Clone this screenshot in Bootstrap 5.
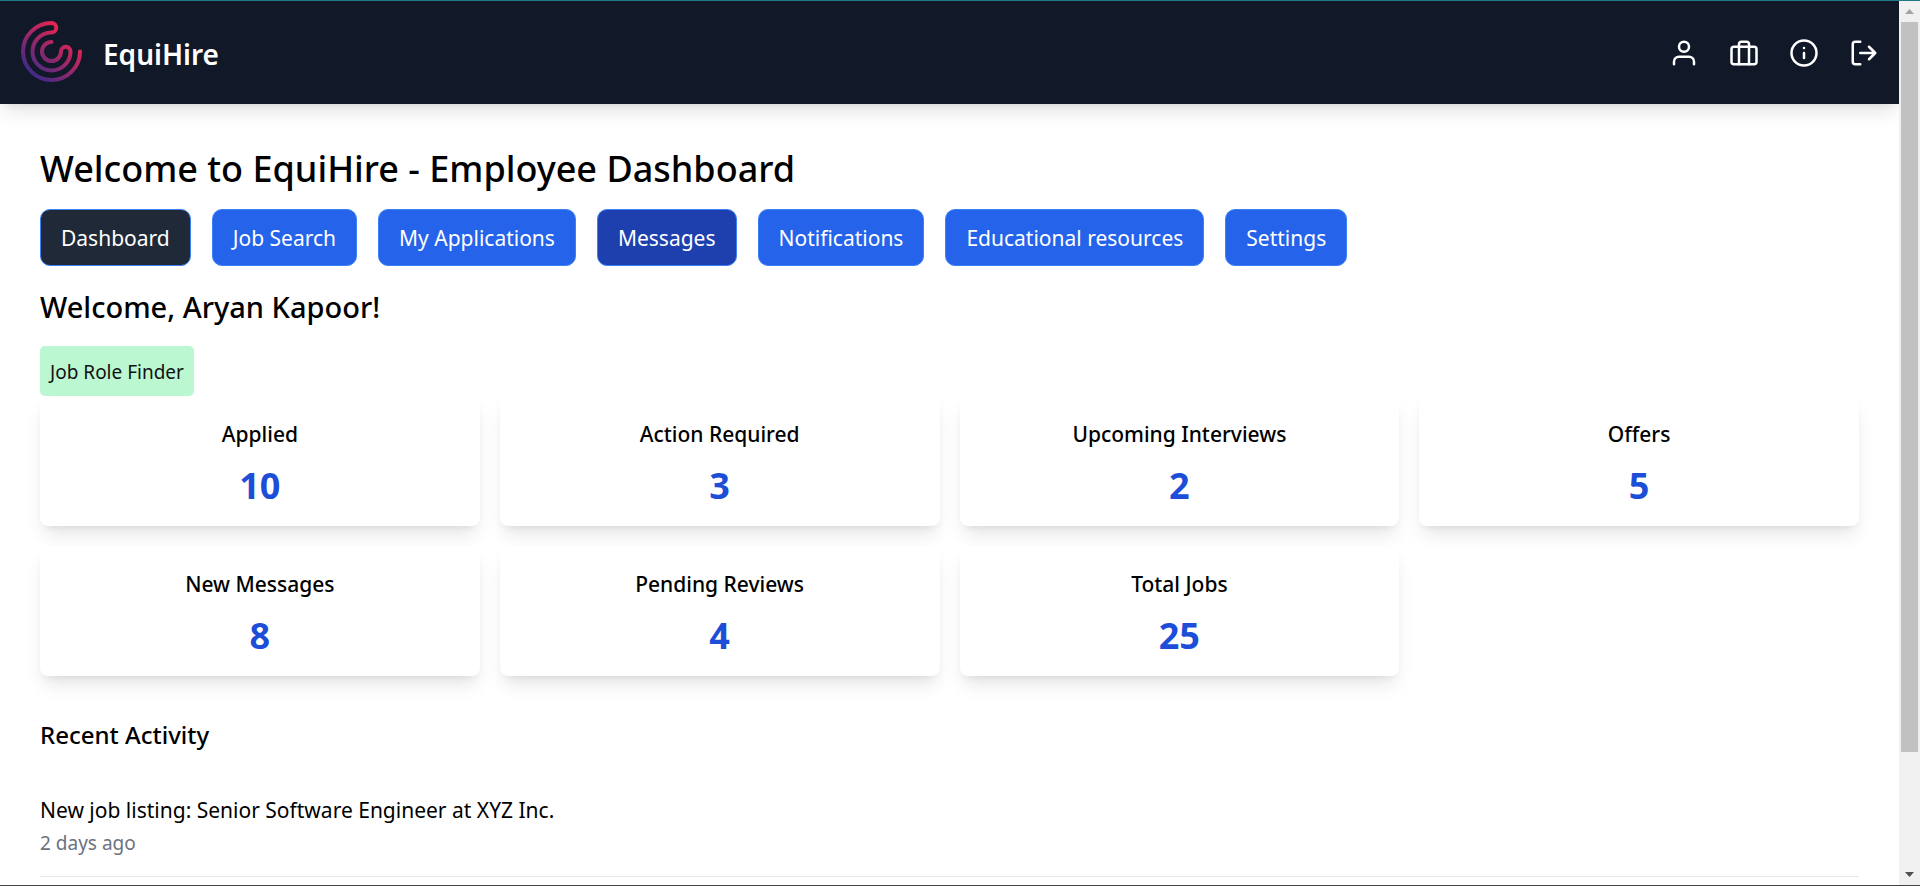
<!DOCTYPE html>
<html lang="en">
<head>
<meta charset="utf-8">
<meta name="viewport" content="width=device-width, initial-scale=1">
<title>EquiHire - Employee Dashboard</title>
<link href="https://cdn.jsdelivr.net/npm/bootstrap@5.3.0/dist/css/bootstrap.min.css" rel="stylesheet">
<style>
  body { font-family: "Noto Sans", "Open Sans", sans-serif; color: #000; background: #fff; }
  .app-window { border-top: 1px solid #1f7a85; border-bottom: 1px solid #444; }
  .view-pane { min-width: 0; }
  .top-nav { background: #111827; padding: 20px; position: relative; z-index: 2; }
  .lifted { box-shadow: 0 12px 19px -4px rgba(0,0,0,.1), 0 5px 8px -5px rgba(0,0,0,.1); }
  .brand-link { gap: 20px; color: #fff; font-size: 28px; font-weight: 600; line-height: 40px; }
  .brand-link:hover { color: #fff; }
  .brand-logo { width: 63px; height: 63px; display: block; }
  .brand-name { padding-top: 2px; }
  .nav-icons { gap: 30px; }
  .nav-icons a { color: #fff; display: block; }
  .line-icon { width: 30px; height: 30px; display: block; fill: none; stroke: currentColor; stroke-width: 2; stroke-linecap: round; stroke-linejoin: round; }
  .page-body { padding: 40px; }
  .page-title { font-size: 36px; font-weight: 500; line-height: 49px; margin-bottom: 16px; }
  .tab-row { gap: 21px; margin-bottom: 20px; }
  .tab-btn { font-size: 21px; line-height: 35px; padding: 11px 20px 9px; border: 1px solid #3b82f6; border-radius: 10px; background: #2563eb; color: #fff; }
  .tab-btn:hover, .tab-btn.is-hover { background: #1e40af; color: #fff; border-color: #3b82f6; }
  .tab-btn.is-current { background: #1f2937; }
  .greeting { font-size: 29px; font-weight: 500; line-height: 42px; margin-bottom: 18px; }
  .finder-btn { font-size: 19px; line-height: 30px; padding: 11px 10px 9px; border: 0; border-radius: 5px; background: #bbf7d0; color: #111; }
  .stat-row { --bs-gutter-x: 20px; --bs-gutter-y: 20px; }
  .stat-card { background: #fff; border-radius: 8px; padding: 20px 20px 16px; text-align: center; }
  .stat-name { font-size: 21px; font-weight: 500; line-height: 37px; margin-bottom: 8px; }
  .stat-value { font-size: 36px; font-weight: 700; line-height: 49px; margin: 0; color: #1d4ed8; }
  .section-title { font-size: 24px; font-weight: 500; line-height: 37px; margin: 40px 0 18px; }
  .activity-item { padding: 22px 0 18px; border-bottom: 1px solid #e5e7eb; }
  .activity-text { font-size: 21px; line-height: 35px; }
  .activity-time { font-size: 19px; line-height: 30px; color: #6b7280; }
  .scroll-track { width: 21px; background: #f0f0f0; }
  .scroll-arrow { height: 21px; flex: none; }
  .scroll-arrow svg { width: 9px; height: 5px; display: block; }
  .scroll-thumb { width: 17px; background: #c1c1c1; flex: 730; }
  .scroll-rest { flex: 112; }
</style>
</head>
<body>
<div class="app-window d-flex vh-100 overflow-hidden">
  <div class="view-pane flex-grow-1 overflow-hidden">
    <header class="top-nav lifted d-flex justify-content-between align-items-center">
      <a href="#" class="brand-link d-flex align-items-center text-decoration-none">
        <svg class="brand-logo" viewBox="0 1 63 63" aria-hidden="true">
          <defs><linearGradient id="logoFade" gradientUnits="userSpaceOnUse" x1="12" y1="52" x2="46" y2="12"><stop offset="0" stop-color="#462a86"/><stop offset="1" stop-color="#ea2550"/></linearGradient></defs>
          <path d="M60 31.5A28.5 28.5 0 1 1 31.5 3A4.75 4.75 0 0 1 31.5 12.5A19 19 0 1 0 50.5 31.5A4.75 4.75 0 0 0 41 31.5A9.5 9.5 0 1 1 31.5 22" fill="none" stroke="url(#logoFade)" stroke-width="4" stroke-linecap="round"/>
        </svg>
        <span class="brand-name">EquiHire</span>
      </a>
      <nav class="nav-icons d-flex" aria-label="Account">
        <a href="#" aria-label="Profile"><svg class="line-icon" viewBox="0 0 24 24"><path d="M20 21v-2a4 4 0 0 0-4-4H8a4 4 0 0 0-4 4v2"/><circle cx="12" cy="7" r="4"/></svg></a>
        <a href="#" aria-label="Jobs"><svg class="line-icon" viewBox="0 0 24 24"><rect x="2" y="7" width="20" height="14" rx="2"/><path d="M16 21V5a2 2 0 0 0-2-2h-4a2 2 0 0 0-2 2v16"/></svg></a>
        <a href="#" aria-label="About"><svg class="line-icon" viewBox="0 0 24 24"><circle cx="12" cy="12" r="10"/><path d="M12 16v-4M12 8h.01"/></svg></a>
        <a href="#" aria-label="Log out"><svg class="line-icon" viewBox="0 0 24 24"><path d="M9 21H5a2 2 0 0 1-2-2V5a2 2 0 0 1 2-2h4M16 17l5-5-5-5M21 12H9"/></svg></a>
      </nav>
    </header>

    <main class="page-body">
      <h1 class="page-title">Welcome to EquiHire - Employee Dashboard</h1>
      <div class="tab-row d-flex flex-wrap">
        <button type="button" class="btn tab-btn is-current">Dashboard</button>
        <button type="button" class="btn tab-btn">Job Search</button>
        <button type="button" class="btn tab-btn">My Applications</button>
        <button type="button" class="btn tab-btn is-hover">Messages</button>
        <button type="button" class="btn tab-btn">Notifications</button>
        <button type="button" class="btn tab-btn">Educational resources</button>
        <button type="button" class="btn tab-btn">Settings</button>
      </div>
      <h2 class="greeting">Welcome, Aryan Kapoor!</h2>
      <button type="button" class="finder-btn d-block">Job Role Finder</button>

      <div class="row row-cols-2 row-cols-lg-4 stat-row mt-0">
        <div class="col mt-0"><div class="stat-card lifted"><h3 class="stat-name">Applied</h3><p class="stat-value">10</p></div></div>
        <div class="col mt-0"><div class="stat-card lifted"><h3 class="stat-name">Action Required</h3><p class="stat-value">3</p></div></div>
        <div class="col mt-0"><div class="stat-card lifted"><h3 class="stat-name">Upcoming Interviews</h3><p class="stat-value">2</p></div></div>
        <div class="col mt-0"><div class="stat-card lifted"><h3 class="stat-name">Offers</h3><p class="stat-value">5</p></div></div>
        <div class="col"><div class="stat-card lifted"><h3 class="stat-name">New Messages</h3><p class="stat-value">8</p></div></div>
        <div class="col"><div class="stat-card lifted"><h3 class="stat-name">Pending Reviews</h3><p class="stat-value">4</p></div></div>
        <div class="col"><div class="stat-card lifted"><h3 class="stat-name">Total Jobs</h3><p class="stat-value">25</p></div></div>
      </div>

      <h3 class="section-title">Recent Activity</h3>
      <ul class="list-unstyled mb-0">
        <li class="activity-item">
          <div class="activity-text">New job listing: Senior Software Engineer at XYZ Inc.</div>
          <div class="activity-time">2 days ago</div>
        </li>
      </ul>
    </main>
  </div>

  <div class="scroll-track d-flex flex-column align-items-center flex-shrink-0" aria-hidden="true">
    <div class="scroll-arrow d-flex align-items-center"><svg viewBox="0 0 9 5"><path d="M0 5L4.500 0L9 5z" fill="#a3a3a3"/></svg></div>
    <div class="scroll-thumb"></div>
    <div class="scroll-rest"></div>
    <div class="scroll-arrow d-flex align-items-center"><svg viewBox="0 0 9 5"><path d="M0 0L4.500 5L9 0z" fill="#505050"/></svg></div>
  </div>
</div>
<script src="https://cdn.jsdelivr.net/npm/bootstrap@5.3.0/dist/js/bootstrap.bundle.min.js"></script>
</body>
</html>
